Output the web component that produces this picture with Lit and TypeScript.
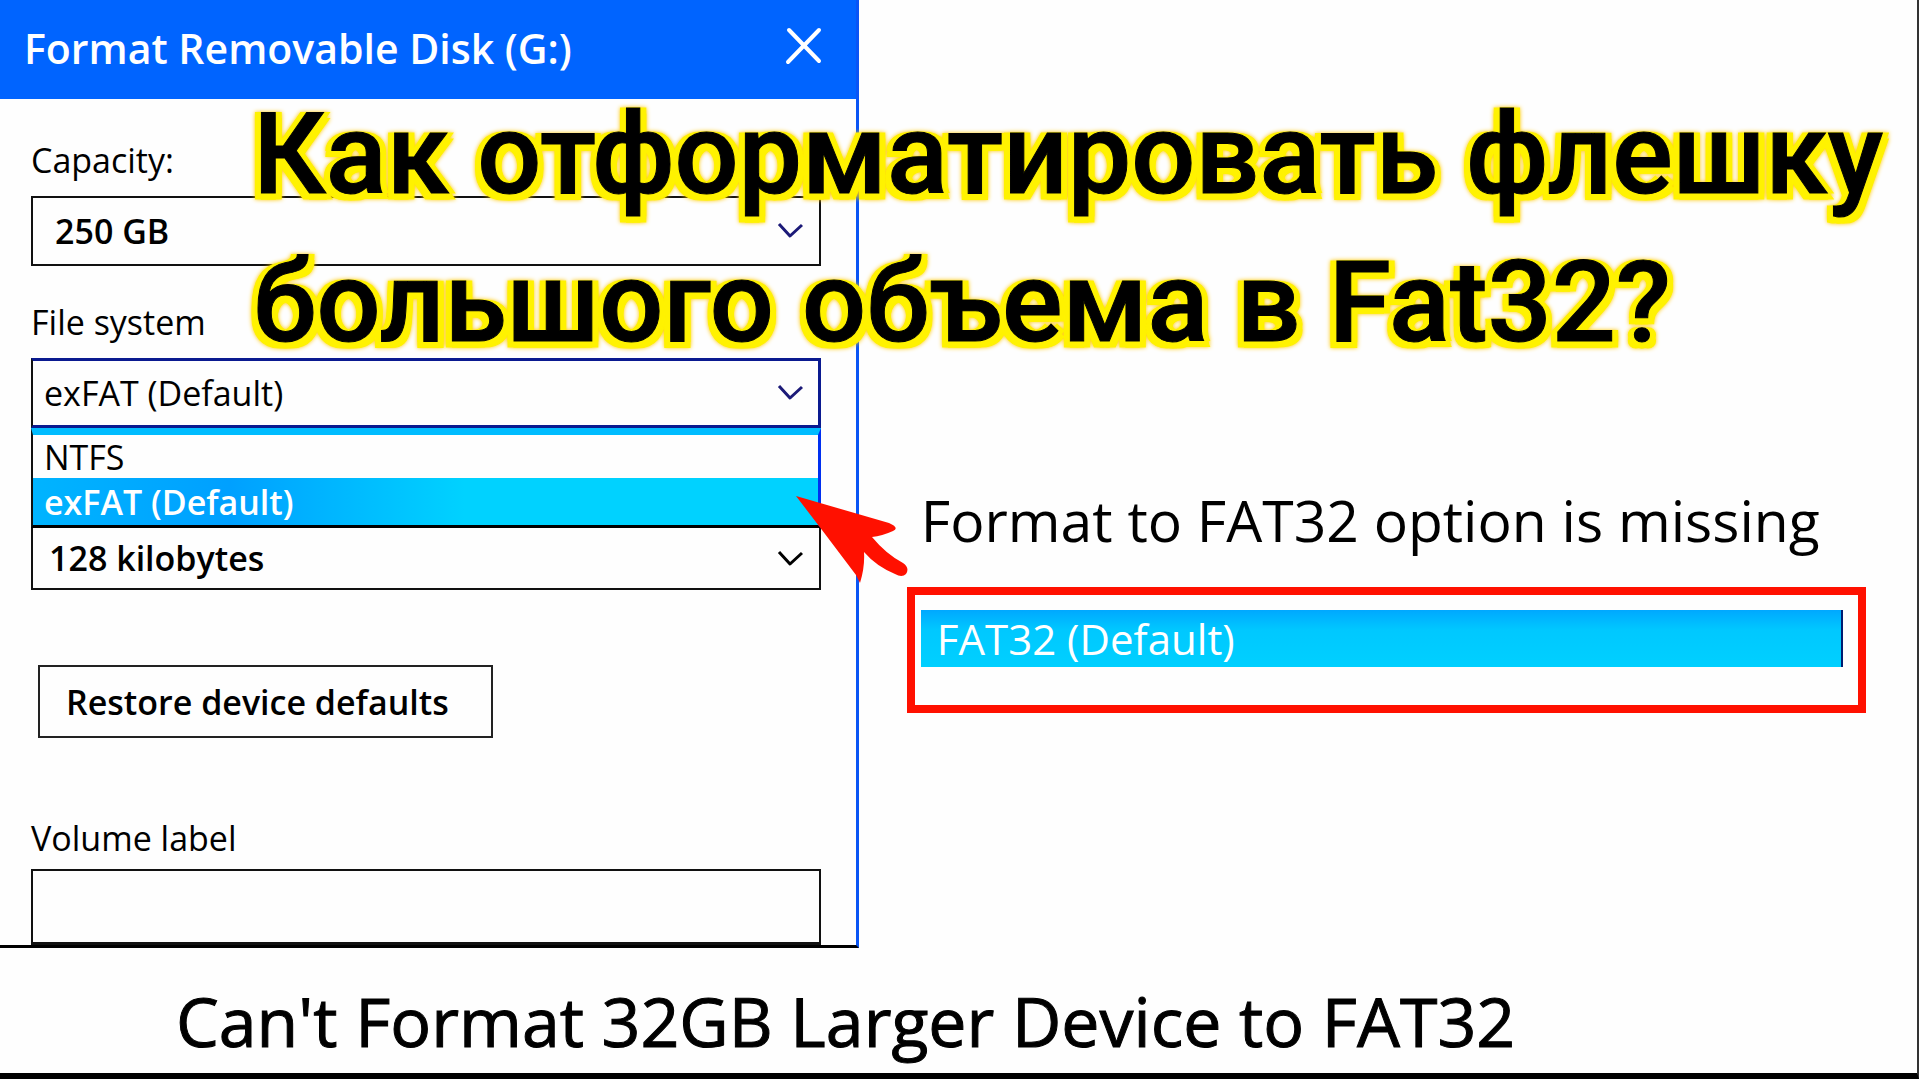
import { LitElement, html, css } from "lit";
import { customElement } from "lit/decorators.js";

const chevron = html`<svg class="chevron" viewBox="0 0 28 20" aria-hidden="true">
  <path d="M2 3 L13 15 L25 4" fill="none" stroke="currentColor" stroke-width="3" stroke-linejoin="round" />
</svg>`;

@customElement("format-dialog")
export class FormatDialog extends LitElement {
  static styles = css`
    :host {
      display: flex;
      flex-direction: column;
      box-sizing: border-box;
      border-right: 3px solid #0a55f5;
      border-bottom: 3px solid #000;
      color: #000;
      font: 34px/44px "Open Sans", "Noto Sans", sans-serif;
    }
    * {
      box-sizing: border-box;
    }
    .titlebar {
      display: flex;
      align-items: center;
      justify-content: space-between;
      height: 99px;
      padding: 0 31px 4px 24px;
      background: #0064ff;
      color: #fff;
    }
    .title {
      margin: 0;
      font-size: 41px;
      font-weight: 600;
      line-height: 48px;
    }
    .close {
      display: flex;
      padding: 0;
      border: 0;
      background: none;
      color: inherit;
    }
    .close svg {
      width: 42px;
      height: 42px;
    }
    .form {
      display: flex;
      flex-direction: column;
      padding: 39px 35px 0 31px;
    }
    .label {
      margin-bottom: 14px;
    }
    .label.system {
      margin-top: 34px;
    }
    .label.volume {
      margin: 78px 0 9px;
    }
    .field {
      position: relative;
      display: flex;
      height: 70px;
    }
    .field select,
    .name {
      width: 100%;
      margin: 0;
      padding: 0 22px;
      appearance: none;
      border: 2px solid #111;
      border-radius: 0;
      background: #fefefe;
      color: #000;
      font: inherit;
      font-weight: 600;
    }
    .field.open select {
      padding: 0 11px;
      border: 3px solid #0a1a90;
      border-left: 2px solid #111;
      font-weight: 500;
    }
    .field.unit {
      height: 62px;
    }
    .field.unit select {
      padding: 0 16px;
      border-top: 0;
    }
    .chevron {
      position: absolute;
      right: 16px;
      top: 50%;
      width: 28px;
      height: 20px;
      margin-top: -10px;
      pointer-events: none;
    }
    .open .chevron,
    .capacity .chevron {
      color: #1c1a78;
    }
    .list {
      display: flex;
      flex-direction: column;
      margin: 0;
      padding: 0;
      list-style: none;
      border-top: 7px solid #00bcff;
      border-left: 2px solid #111;
      border-right: 3px solid #0030f0;
      border-bottom: 3px solid #000;
    }
    .option {
      display: block;
      width: 100%;
      height: 43px;
      padding: 0 11px;
      border: 0;
      background: #fefefe;
      color: #000;
      text-align: left;
      font: inherit;
    }
    .option.selected {
      height: 47px;
      background: linear-gradient(90deg, #00b4ff, #00a0ff 25%, #00d2ff 55%, #00d2ff);
      color: #fff;
      font-weight: 600;
    }
    .restore {
      align-self: flex-start;
      height: 73px;
      margin: 75px 0 0 7px;
      padding: 0 42px 0 26px;
      border: 2px solid #222;
      background: #fefefe;
      color: #000;
      font: inherit;
      font-weight: 600;
    }
    .name {
      height: 76px;
      border-bottom-width: 3px;
    }
  `;

  render() {
    return html`
      <header class="titlebar">
        <h2 class="title">Format Removable Disk (G:)</h2>
        <button class="close" aria-label="Close">
          <svg viewBox="0 0 42 42" aria-hidden="true">
            <path d="M6 3 L36 34 M36 3 L5 35" fill="none" stroke="currentColor" stroke-width="4" stroke-linecap="round" />
          </svg>
        </button>
      </header>
      <form class="form">
        <label class="label" for="capacity">Capacity:</label>
        <div class="field capacity">
          <select id="capacity"><option>250 GB</option></select>
          ${chevron}
        </div>
        <label class="label system" for="system">File system</label>
        <div class="field open">
          <select id="system"><option>exFAT (Default)</option><option>NTFS</option></select>
          ${chevron}
        </div>
        <ul class="list">
          <li><button type="button" class="option">NTFS</button></li>
          <li><button type="button" class="option selected">exFAT (Default)</button></li>
        </ul>
        <div class="field unit">
          <select aria-label="Allocation unit size"><option>128 kilobytes</option></select>
          ${chevron}
        </div>
        <button type="button" class="restore">Restore device defaults</button>
        <label class="label volume" for="name">Volume label</label>
        <input class="name" id="name" type="text" />
      </form>
    `;
  }
}

@customElement("app-root")
export class AppRoot extends LitElement {
  static styles = css`
    :host {
      display: block;
      font-family: "Open Sans", "Noto Sans", sans-serif;
      color: #000;
    }
    * {
      box-sizing: border-box;
    }
    .page {
      position: relative;
      display: flex;
      flex-direction: column;
      min-height: 100vh;
      overflow: hidden;
      background: #fefefe;
      border-right: 2px solid #333;
      border-bottom: 6px solid #000;
    }
    .columns {
      display: grid;
      grid-template-columns: 44.8% 1fr;
    }
    .note {
      display: flex;
      flex-direction: column;
      padding: 484px 51px 0 48px;
    }
    .missing {
      margin: 0 0 31px 14px;
      font-size: 57px;
      line-height: 72px;
      white-space: nowrap;
    }
    .frame {
      display: flex;
      height: 126px;
      padding: 15px 15px 0 6px;
      border: 8px solid #ff1000;
    }
    .pick {
      flex: 1;
      height: 57px;
      padding: 0 16px;
      border: 0;
      border-right: 2px solid #001c70;
      background: linear-gradient(#00a8ff, #00c8ff 35%, #00d0ff);
      color: #fff;
      text-align: left;
      font: 500 42px/56px "Open Sans", "Noto Sans", sans-serif;
    }
    .caption {
      margin: 0;
      padding: 28px 0 0 176px;
      font-size: 68px;
      line-height: 90px;
      white-space: nowrap;
      -webkit-text-stroke: 1px #000;
    }
    .headline {
      position: absolute;
      left: 13.2%;
      top: 81px;
      margin: 0;
      font: 500 113px/148px Roboto, sans-serif;
      white-space: nowrap;
      -webkit-text-stroke: 1px #000;
      filter: drop-shadow(6px 0 0 #fff200) drop-shadow(-6px 0 0 #fff200) drop-shadow(0 6px 0 #fff200) drop-shadow(0 0 2px #ffc800);
    }
    .pointer {
      position: absolute;
      left: 41.5%;
      top: 495px;
      width: 114px;
      height: 84px;
      overflow: visible;
    }
  `;

  render() {
    return html`
      <main class="page">
        <div class="columns">
          <format-dialog></format-dialog>
          <section class="note">
            <p class="missing">Format to FAT32 option is missing</p>
            <div class="frame"><button class="pick">FAT32 (Default)</button></div>
          </section>
        </div>
        <p class="caption">Can't Format 32GB Larger Device to FAT32</p>
        <h1 class="headline">Как отформатировать флешку<br />большого объема в Fat32?</h1>
        <svg class="pointer" viewBox="0 0 114 84" aria-hidden="true">
          <path
            d="M0 1 L93 28 Q104 33 97 36 Q86 41 76 42 Q90 59 107 68 Q114 73 110 79 Q106 83 99 79 Q80 71 68 57 Q69 72 64 88 L60 80 L26 35 Z"
            fill="#ff1000"
          />
        </svg>
      </main>
    `;
  }
}
